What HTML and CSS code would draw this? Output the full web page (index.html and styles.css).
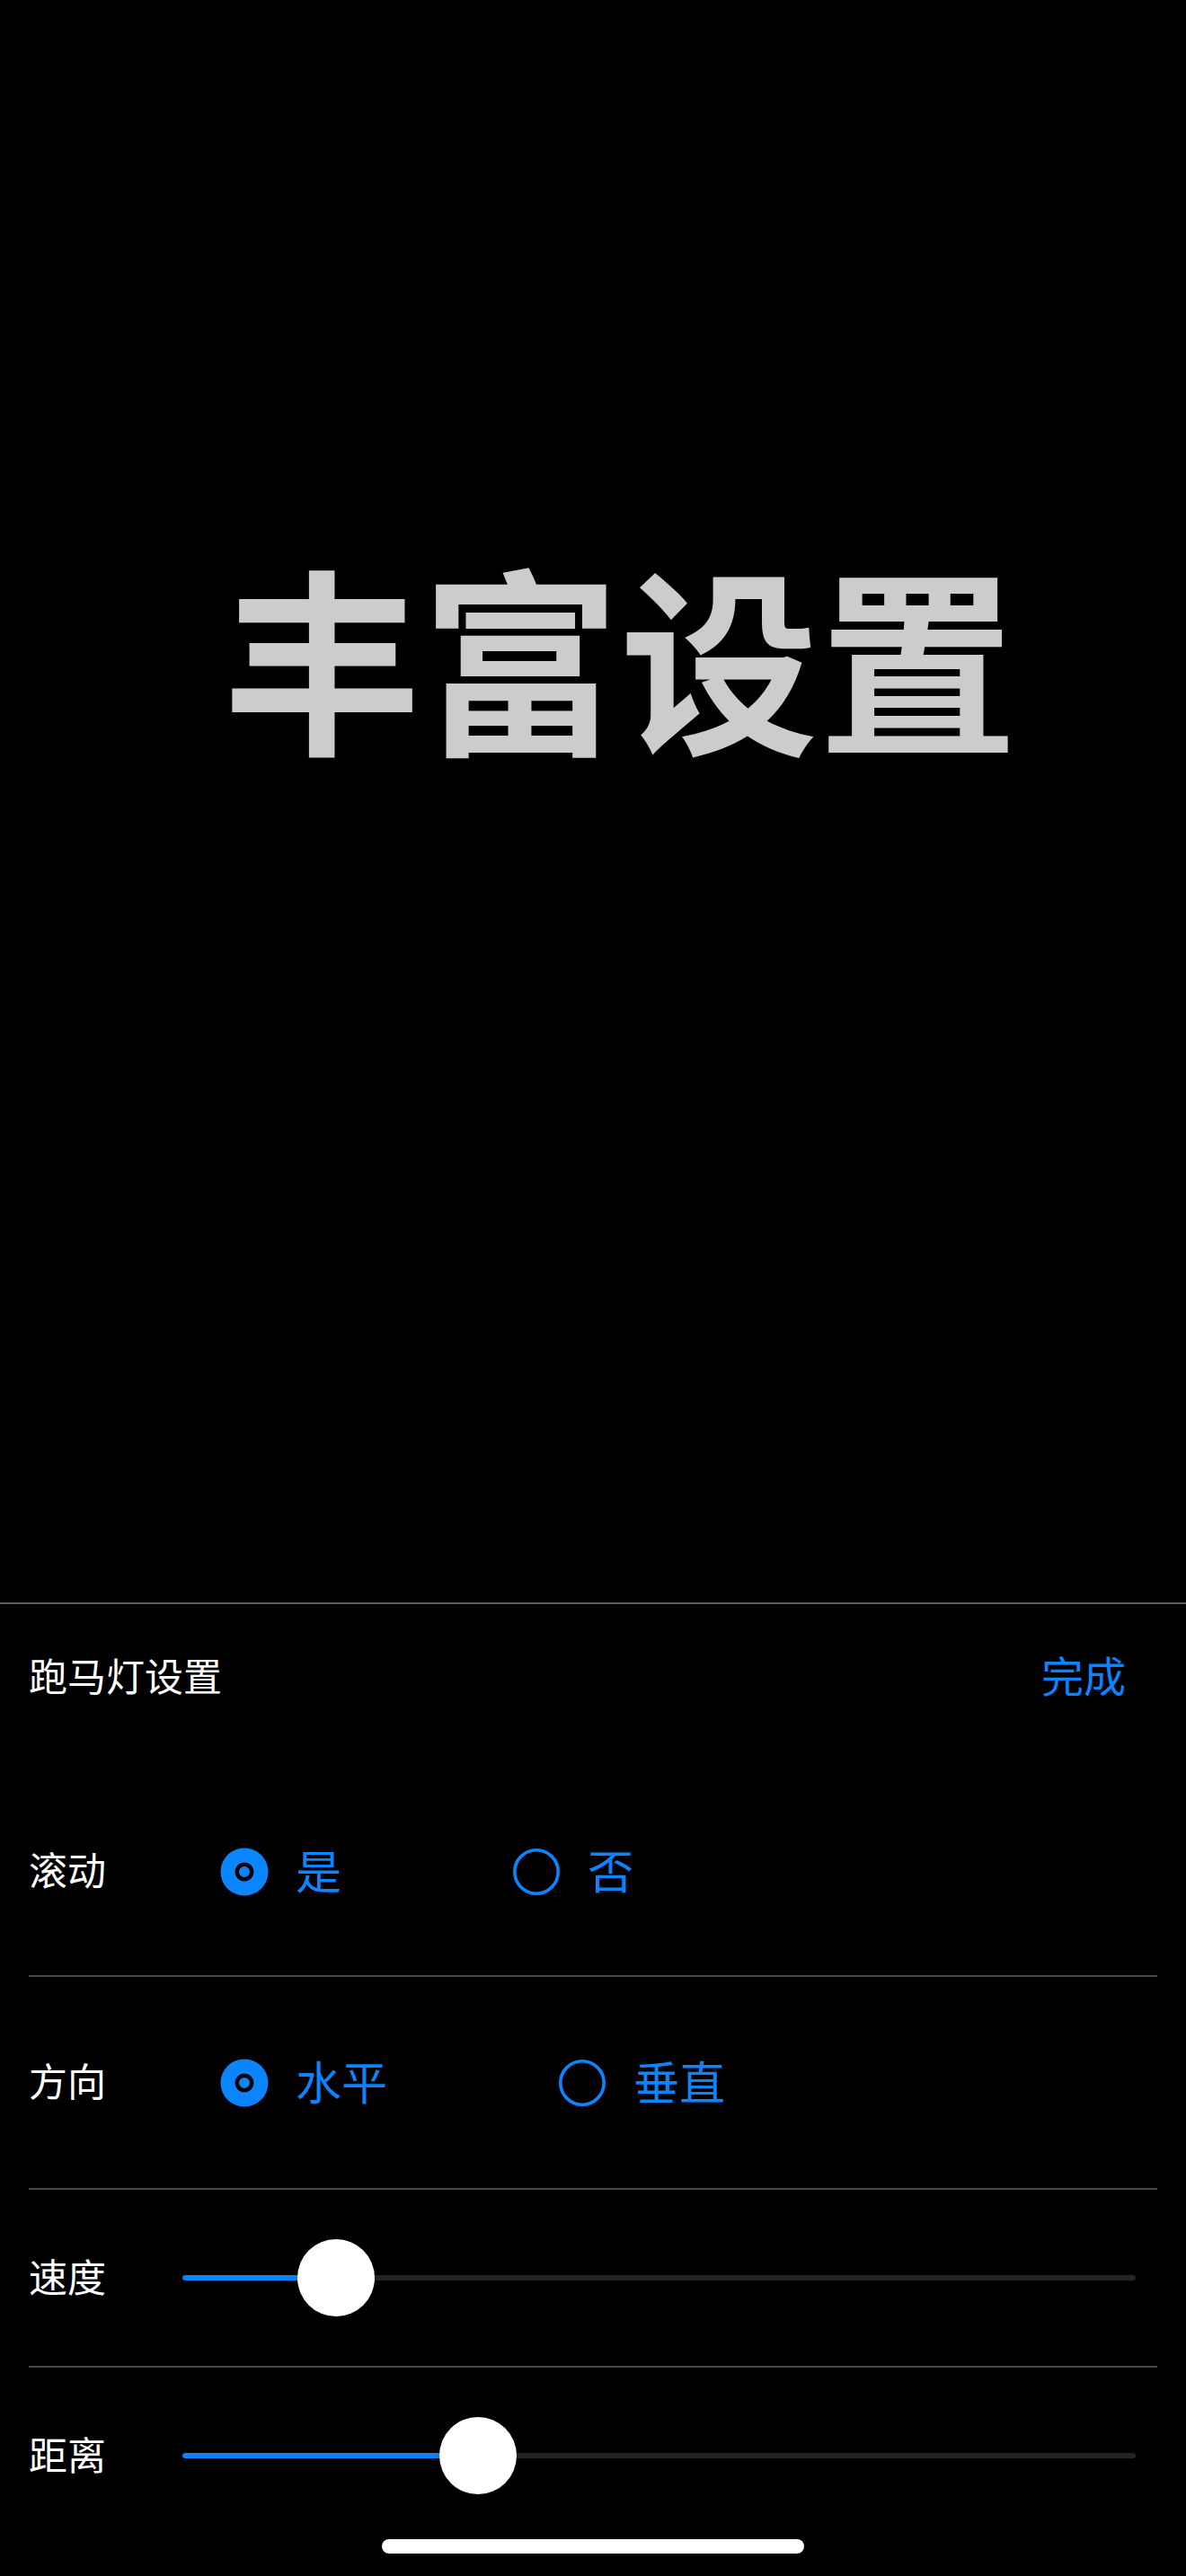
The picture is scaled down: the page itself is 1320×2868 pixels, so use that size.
FILE: index.html
```html
<!DOCTYPE html>
<html lang="zh-CN">
<head>
<meta charset="utf-8">
<title>跑马灯设置</title>
<link rel="stylesheet" href="styles.css">
</head>
<body>
<div class="screen">
  <div class="stage">
    <div class="marquee-text">丰富设置</div>
  </div>
  <div class="panel">
    <div class="panel-header">
      <div class="panel-title">跑马灯设置</div>
      <div class="panel-done">完成</div>
    </div>
    <div class="row row-radio row-first">
      <div class="row-label">滚动</div>
      <div class="options">
        <div class="option">
          <svg class="radio" width="54" height="54" viewBox="0 0 54 54"><circle cx="27" cy="27" r="26.5" fill="#0a84ff"/><circle cx="27" cy="27" r="8.25" fill="none" stroke="#000" stroke-width="4.5"/></svg>
          <span class="option-text">是</span>
        </div>
        <div class="option">
          <svg class="radio" width="54" height="54" viewBox="0 0 54 54"><circle cx="27" cy="27" r="24.2" fill="none" stroke="#0a84ff" stroke-width="3.6"/></svg>
          <span class="option-text">否</span>
        </div>
      </div>
    </div>
    <div class="row row-radio">
      <div class="row-label">方向</div>
      <div class="options">
        <div class="option">
          <svg class="radio" width="54" height="54" viewBox="0 0 54 54"><circle cx="27" cy="27" r="26.5" fill="#0a84ff"/><circle cx="27" cy="27" r="8.25" fill="none" stroke="#000" stroke-width="4.5"/></svg>
          <span class="option-text">水平</span>
        </div>
        <div class="option">
          <svg class="radio" width="54" height="54" viewBox="0 0 54 54"><circle cx="27" cy="27" r="24.2" fill="none" stroke="#0a84ff" stroke-width="3.6"/></svg>
          <span class="option-text">垂直</span>
        </div>
      </div>
    </div>
    <div class="row row-slider">
      <div class="row-label slider-label">速度</div>
      <div class="slider">
        <div class="track"><div class="fill" style="width:171px"></div></div>
        <div class="thumb" style="left:128px"></div>
      </div>
    </div>
    <div class="row row-slider row-last">
      <div class="row-label slider-label">距离</div>
      <div class="slider">
        <div class="track"><div class="fill" style="width:329px"></div></div>
        <div class="thumb" style="left:286px"></div>
      </div>
    </div>
  </div>
  <div class="home-indicator"></div>
</div>
</body>
</html>
```

FILE: styles.css
```css
* {
  box-sizing: border-box;
}

html, body {
  margin: 0;
  padding: 0;
  background: #000;
}

body {
  font-family: "Noto Sans CJK SC", "Noto Sans", sans-serif;
  color: #fff;
}

.screen {
  position: relative;
  width: 1320px;
  height: 2868px;
  background: #000;
  overflow: hidden;
}

.stage {
  height: 1784px;
  display: flex;
  justify-content: center;
  align-items: flex-start;
  padding-left: 60px;
  padding-top: 615px;
}

.marquee-text {
  font-size: 221px;
  line-height: 224px;
  font-weight: 700;
  color: #cccccc;
  white-space: nowrap;
}

.panel {
  border-top: 2px solid #5c5c60;
  padding: 0 32px;
}

.panel-header {
  height: 176px;
  display: flex;
  justify-content: space-between;
  align-items: flex-start;
  padding-top: 48px;
  padding-right: 35px;
}

.panel-title {
  font-size: 43px;
  line-height: 60px;
  color: #fff;
}

.panel-done {
  font-size: 47px;
  line-height: 60px;
  color: #0a84ff;
}

.row {
  display: flex;
  align-items: center;
  border-bottom: 2px solid #48484c;
}

.row-radio {
  height: 237px;
}

.row-first {
  height: 239px;
  padding-top: 6px;
}

.row-slider {
  height: 198px;
}

.row-last {
  height: 196px;
  border-bottom: none;
}

.row-label {
  width: 213px;
  flex: none;
  font-size: 43px;
  line-height: 60px;
  padding-bottom: 7px;
  color: #fff;
}

.slider-label {
  width: 171px;
}

.options {
  display: flex;
  align-items: center;
}

.option {
  display: flex;
  align-items: center;
  margin-right: 190px;
}

.radio {
  display: block;
  flex: none;
}

.option-text {
  margin-left: 30px;
  font-size: 51px;
  line-height: 64px;
  padding-bottom: 6px;
  color: #0a84ff;
}

.slider {
  position: relative;
  flex: 1;
  height: 86px;
  margin-right: 24px;
  display: flex;
  align-items: center;
}

.track {
  width: 100%;
  height: 6px;
  border-radius: 3px;
  background: #242426;
  overflow: hidden;
}

.fill {
  height: 100%;
  background: #0a84ff;
  border-radius: 3px;
}

.thumb {
  position: absolute;
  top: 0;
  width: 86px;
  height: 86px;
  border-radius: 50%;
  background: #fff;
  box-shadow: 0 2px 6px rgba(0, 0, 0, 0.2);
}

.home-indicator {
  position: absolute;
  left: 425px;
  bottom: 25px;
  width: 470px;
  height: 16px;
  border-radius: 8px;
  background: #fff;
}
```
